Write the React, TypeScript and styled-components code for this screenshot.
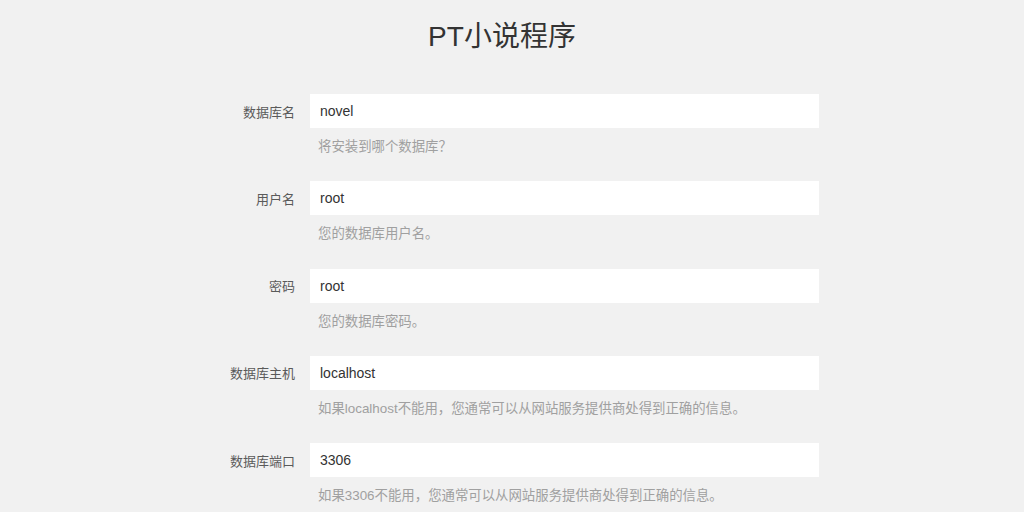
import React from "react";
import styled, { createGlobalStyle } from "styled-components";

const GlobalStyle = createGlobalStyle`
  html, body {
    margin: 0;
    padding: 0;
    background: #f1f1f1;
    font-family: "Liberation Sans", "Noto Sans CJK SC", sans-serif;
  }
`;

const Page = styled.div`
  padding-top: 17px;
`;

const Title = styled.h1`
  margin: 0;
  padding-right: 20px;
  text-align: center;
  font-size: 28px;
  line-height: 40px;
  font-weight: normal;
  color: #333;
`;

const Form = styled.form`
  width: 614px;
  margin: 37px auto 0;
`;

const Row = styled.div`
  display: grid;
  grid-template-columns: 90px 509px;
  column-gap: 15px;
  align-items: center;
  margin-bottom: 25.3px;
`;

const Label = styled.label`
  text-align: right;
  font-size: 13px;
  color: #5a5a5a;
`;

const Input = styled.input`
  box-sizing: border-box;
  height: 34px;
  width: 100%;
  border: none;
  background: #fff;
  padding: 0 10px;
  font-family: "Liberation Sans", "Noto Sans CJK SC", sans-serif;
  font-size: 14px;
  color: #333;
  outline: none;
`;

const Hint = styled.p`
  grid-column: 2;
  margin: 10px 0 0;
  padding-left: 8px;
  font-size: 13.4px;
  line-height: 18px;
  color: #a0a0a0;
`;

const fields = [
  { label: "数据库名", value: "novel", hint: "将安装到哪个数据库？" },
  { label: "用户名", value: "root", hint: "您的数据库用户名。" },
  { label: "密码", value: "root", hint: "您的数据库密码。" },
  {
    label: "数据库主机",
    value: "localhost",
    hint: "如果localhost不能用，您通常可以从网站服务提供商处得到正确的信息。",
  },
  {
    label: "数据库端口",
    value: "3306",
    hint: "如果3306不能用，您通常可以从网站服务提供商处得到正确的信息。",
  },
];

export default function App() {
  return (
    <Page>
      <GlobalStyle />
      <Title>PT小说程序</Title>
      <Form onSubmit={(e) => e.preventDefault()}>
        {fields.map((f) => (
          <Row key={f.label}>
            <Label>{f.label}</Label>
            <Input defaultValue={f.value} />
            <Hint>{f.hint}</Hint>
          </Row>
        ))}
      </Form>
    </Page>
  );
}
